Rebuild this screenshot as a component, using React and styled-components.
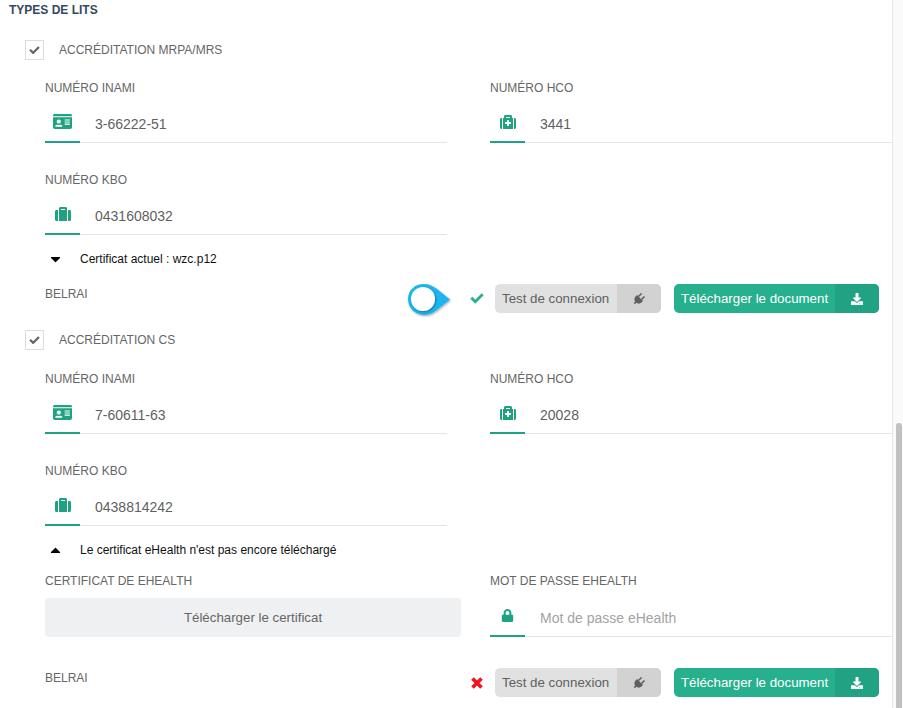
import styled, { createGlobalStyle } from "styled-components";
import { FaIdCard, FaSuitcase, FaMedkit, FaLock, FaDownload, FaCaretDown, FaCaretUp } from "react-icons/fa";

const GlobalStyle = createGlobalStyle`
    html, body {
        margin: 0;
        height: 708px;
        overflow: hidden;
        background: #ffffff;
        font-family: "Liberation Sans", Arial, sans-serif;
    }
`;

const Page = styled.div`
    position: relative;
    display: flex;
    width: 903px;
    height: 708px;
    overflow: hidden;
`;

const Content = styled.div`
    width: 892px;
    flex: none;
`;

const Scrollbar = styled.div`
    position: relative;
    flex: 1;
    border-left: 1px solid #e8e8e8;
    background: #fafafa;
`;

const Thumb = styled.div`
    position: absolute;
    top: 423px;
    left: 3px;
    right: 1px;
    bottom: 0;
    border-radius: 4px 4px 0 0;
    background: #c1c1c1;
`;

const Title = styled.div`
    height: 18px;
    padding-left: 9px;
    font-size: 12px;
    font-weight: bold;
    line-height: 20px;
    color: #34495e;
`;

const Accreditation = styled.label`
    display: flex;
    align-items: center;
    gap: 15px;
    height: 20px;
    margin: ${(p) => p.$top}px 0 0 25px;
    font-size: 12px;
    color: #666666;
`;

const CheckBox = styled.span`
    display: flex;
    align-items: center;
    justify-content: center;
    box-sizing: border-box;
    width: 19px;
    height: 20px;
    border: 1px solid #dddddd;
    color: #666666;
`;

const Grid = styled.div`
    display: grid;
    grid-template-columns: 402px 402px;
    column-gap: 43px;
    row-gap: 29px;
    margin-left: 45px;
    margin-top: ${(p) => p.$top || 0}px;
`;

const FieldLabel = styled.div`
    height: 16px;
    font-size: 12px;
    line-height: 16px;
    color: #666666;
`;

const InputRow = styled.div`
    display: flex;
    align-items: center;
    height: ${(p) => p.$height || 36}px;
    margin-top: 10px;
    border-bottom: 1px solid #e3e5e6;
`;

const IconCell = styled.span`
    display: flex;
    align-items: center;
    justify-content: center;
    box-sizing: border-box;
    flex: none;
    align-self: stretch;
    width: 35px;
    margin-bottom: -1px;
    padding-bottom: 4px;
    border-bottom: 2px solid #1fa281;
    font-size: ${(p) => p.$size || 16}px;
    color: #1fa281;
`;

const Value = styled.span`
    margin-left: 15px;
    font-size: 14px;
    color: ${(p) => (p.$placeholder ? "#a3a3a3" : "#5f5f5f")};
`;

const CertLine = styled.div`
    display: flex;
    align-items: center;
    height: 16px;
    margin: ${(p) => p.$top}px 0 0 50px;
    font-size: 12px;
    color: #111111;
`;

const Caret = styled.span`
    display: flex;
    justify-content: center;
    width: 11px;
    margin-right: 19px;
    font-size: 16px;
    color: #000000;
`;

const BelraiRow = styled.div`
    display: flex;
    align-items: center;
    height: 29px;
    margin: ${(p) => p.$top}px 13px 0 45px;
`;

const BelraiLabel = styled.div`
    flex: 1;
    align-self: flex-start;
    font-size: 12px;
    line-height: 20px;
    color: #666666;
`;

const Status = styled.span`
    display: flex;
    justify-content: center;
    width: 14px;
    margin-right: 11px;
    color: ${(p) => p.$color};
`;

const SplitButton = styled.div`
    display: flex;
    align-items: center;
    flex: none;
    width: ${(p) => (p.$primary ? 205 : 166)}px;
    height: 29px;
    overflow: hidden;
    margin-left: ${(p) => (p.$primary ? 13 : 0)}px;
    border-radius: 5px;
    font-size: 13.3px;
    background: ${(p) => (p.$primary ? "#27b08e" : "#e1e1e1")};
    color: ${(p) => (p.$primary ? "#ffffff" : "#5f5f5f")};
`;

const ButtonText = styled.span`
    flex: 1;
    padding-left: 7px;
    white-space: nowrap;
`;

const ButtonIcon = styled.span`
    display: flex;
    align-items: center;
    justify-content: center;
    align-self: stretch;
    width: 44px;
    font-size: 12px;
    background: ${(p) => (p.$primary ? "#21a283" : "#d2d2d2")};
    color: ${(p) => (p.$primary ? "#ffffff" : "#5f5f5f")};
`;

const UploadButton = styled.div`
    display: flex;
    align-items: center;
    justify-content: center;
    width: 416px;
    height: 39px;
    margin-top: 9px;
    border-radius: 4px;
    font-size: 13.3px;
    background: #eef0f1;
    color: #666666;
`;

const Marker = styled.svg`
    position: absolute;
    top: 280px;
    left: 404px;
    width: 52px;
    height: 42px;
`;

function CheckIcon({ width }) {
    return (
        <svg width={width} viewBox="0 0 16 12" fill="none" stroke="currentColor" strokeWidth="3.2">
            <polyline points="1.5,5.5 6,10 14.5,1.5" />
        </svg>
    );
}

function CrossIcon() {
    return (
        <svg width="12" height="12" viewBox="0 0 12 12" fill="none" stroke="currentColor" strokeWidth="3.6">
            <path d="M1.5 1.5 L10.5 10.5 M10.5 1.5 L1.5 10.5" />
        </svg>
    );
}

function PlugIcon() {
    return (
        <svg width="14" height="14" viewBox="0 0 14 14" fill="currentColor">
            <path d="M5 3 L11 9 L9.5 10.5 C7.8 12 5.6 11.9 4.4 10.8 L2.9 12.3 L1.7 11.1 L3.2 9.6 C2.1 8.3 2.1 6.2 3.5 4.5 Z" />
            <path d="M6.5 4.5 L9.5 1.5 M9.5 7.5 L12.5 4.5" stroke="currentColor" strokeWidth="1.6" fill="none" />
        </svg>
    );
}

function Input({ icon, size, value, placeholder, height }) {
    return (
        <InputRow $height={height}>
            <IconCell $size={size}>{icon}</IconCell>
            <Value $placeholder={placeholder}>{value}</Value>
        </InputRow>
    );
}

function Belrai({ top, ok }) {
    return (
        <BelraiRow $top={top}>
            <BelraiLabel>BELRAI</BelraiLabel>
            <Status $color={ok ? "#27b08e" : "#f0141e"}>{ok ? <CheckIcon width={14} /> : <CrossIcon />}</Status>
            <SplitButton>
                <ButtonText>Test de connexion</ButtonText>
                <ButtonIcon><PlugIcon /></ButtonIcon>
            </SplitButton>
            <SplitButton $primary>
                <ButtonText>Télécharger le document</ButtonText>
                <ButtonIcon $primary><FaDownload /></ButtonIcon>
            </SplitButton>
        </BelraiRow>
    );
}

function Numbers({ inami, hco, kbo, top }) {
    return (
        <Grid $top={top}>
            <div>
                <FieldLabel>NUMÉRO INAMI</FieldLabel>
                <Input icon={<FaIdCard />} size={19} value={inami} />
            </div>
            <div>
                <FieldLabel>NUMÉRO HCO</FieldLabel>
                <Input icon={<FaMedkit />} value={hco} />
            </div>
            <div>
                <FieldLabel>NUMÉRO KBO</FieldLabel>
                <Input icon={<FaSuitcase />} value={kbo} />
            </div>
        </Grid>
    );
}

export default function App() {
    return (
        <Page>
            <GlobalStyle />
            <Content>
                <Title>TYPES DE LITS</Title>

                <Accreditation $top={22}>
                    <CheckBox><CheckIcon width={11} /></CheckBox>
                    ACCRÉDITATION MRPA/MRS
                </Accreditation>
                <Numbers top={20} inami="3-66222-51" hco="3441" kbo="0431608032" />
                <CertLine $top={16}>
                    <Caret><FaCaretDown /></Caret>
                    Certificat actuel : wzc.p12
                </CertLine>
                <Belrai top={17} ok />

                <Accreditation $top={17}>
                    <CheckBox><CheckIcon width={11} /></CheckBox>
                    ACCRÉDITATION CS
                </Accreditation>
                <Numbers top={21} inami="7-60611-63" hco="20028" kbo="0438814242" />
                <CertLine $top={16}>
                    <Caret><FaCaretUp /></Caret>
                    Le certificat eHealth n'est pas encore téléchargé
                </CertLine>

                <Grid $top={15}>
                    <div>
                        <FieldLabel>CERTIFICAT DE EHEALTH</FieldLabel>
                        <UploadButton>Télécharger le certificat</UploadButton>
                    </div>
                    <div>
                        <FieldLabel>MOT DE PASSE EHEALTH</FieldLabel>
                        <Input icon={<FaLock />} size={13} value="Mot de passe eHealth" placeholder height={37} />
                    </div>
                </Grid>
                <Belrai top={31} />
            </Content>

            <Scrollbar><Thumb /></Scrollbar>

            <Marker viewBox="0 0 52 42">
                <defs>
                    <filter id="markerShadow" x="-20%" y="-20%" width="140%" height="140%">
                        <feDropShadow dx="1" dy="1" stdDeviation="1" floodColor="#000000" floodOpacity="0.35" />
                    </filter>
                </defs>
                <path d="M20 4 C25 4 29 6 33 9 L46 19.5 L33 30 C29 33 25 35 20 35 C11 35 4 28 4 19 C4 10 11 4 20 4 Z" fill="#1cb5ee" filter="url(#markerShadow)" />
                <circle cx="19" cy="19" r="12" fill="#ffffff" filter="url(#markerShadow)" />
            </Marker>
        </Page>
    );
}
